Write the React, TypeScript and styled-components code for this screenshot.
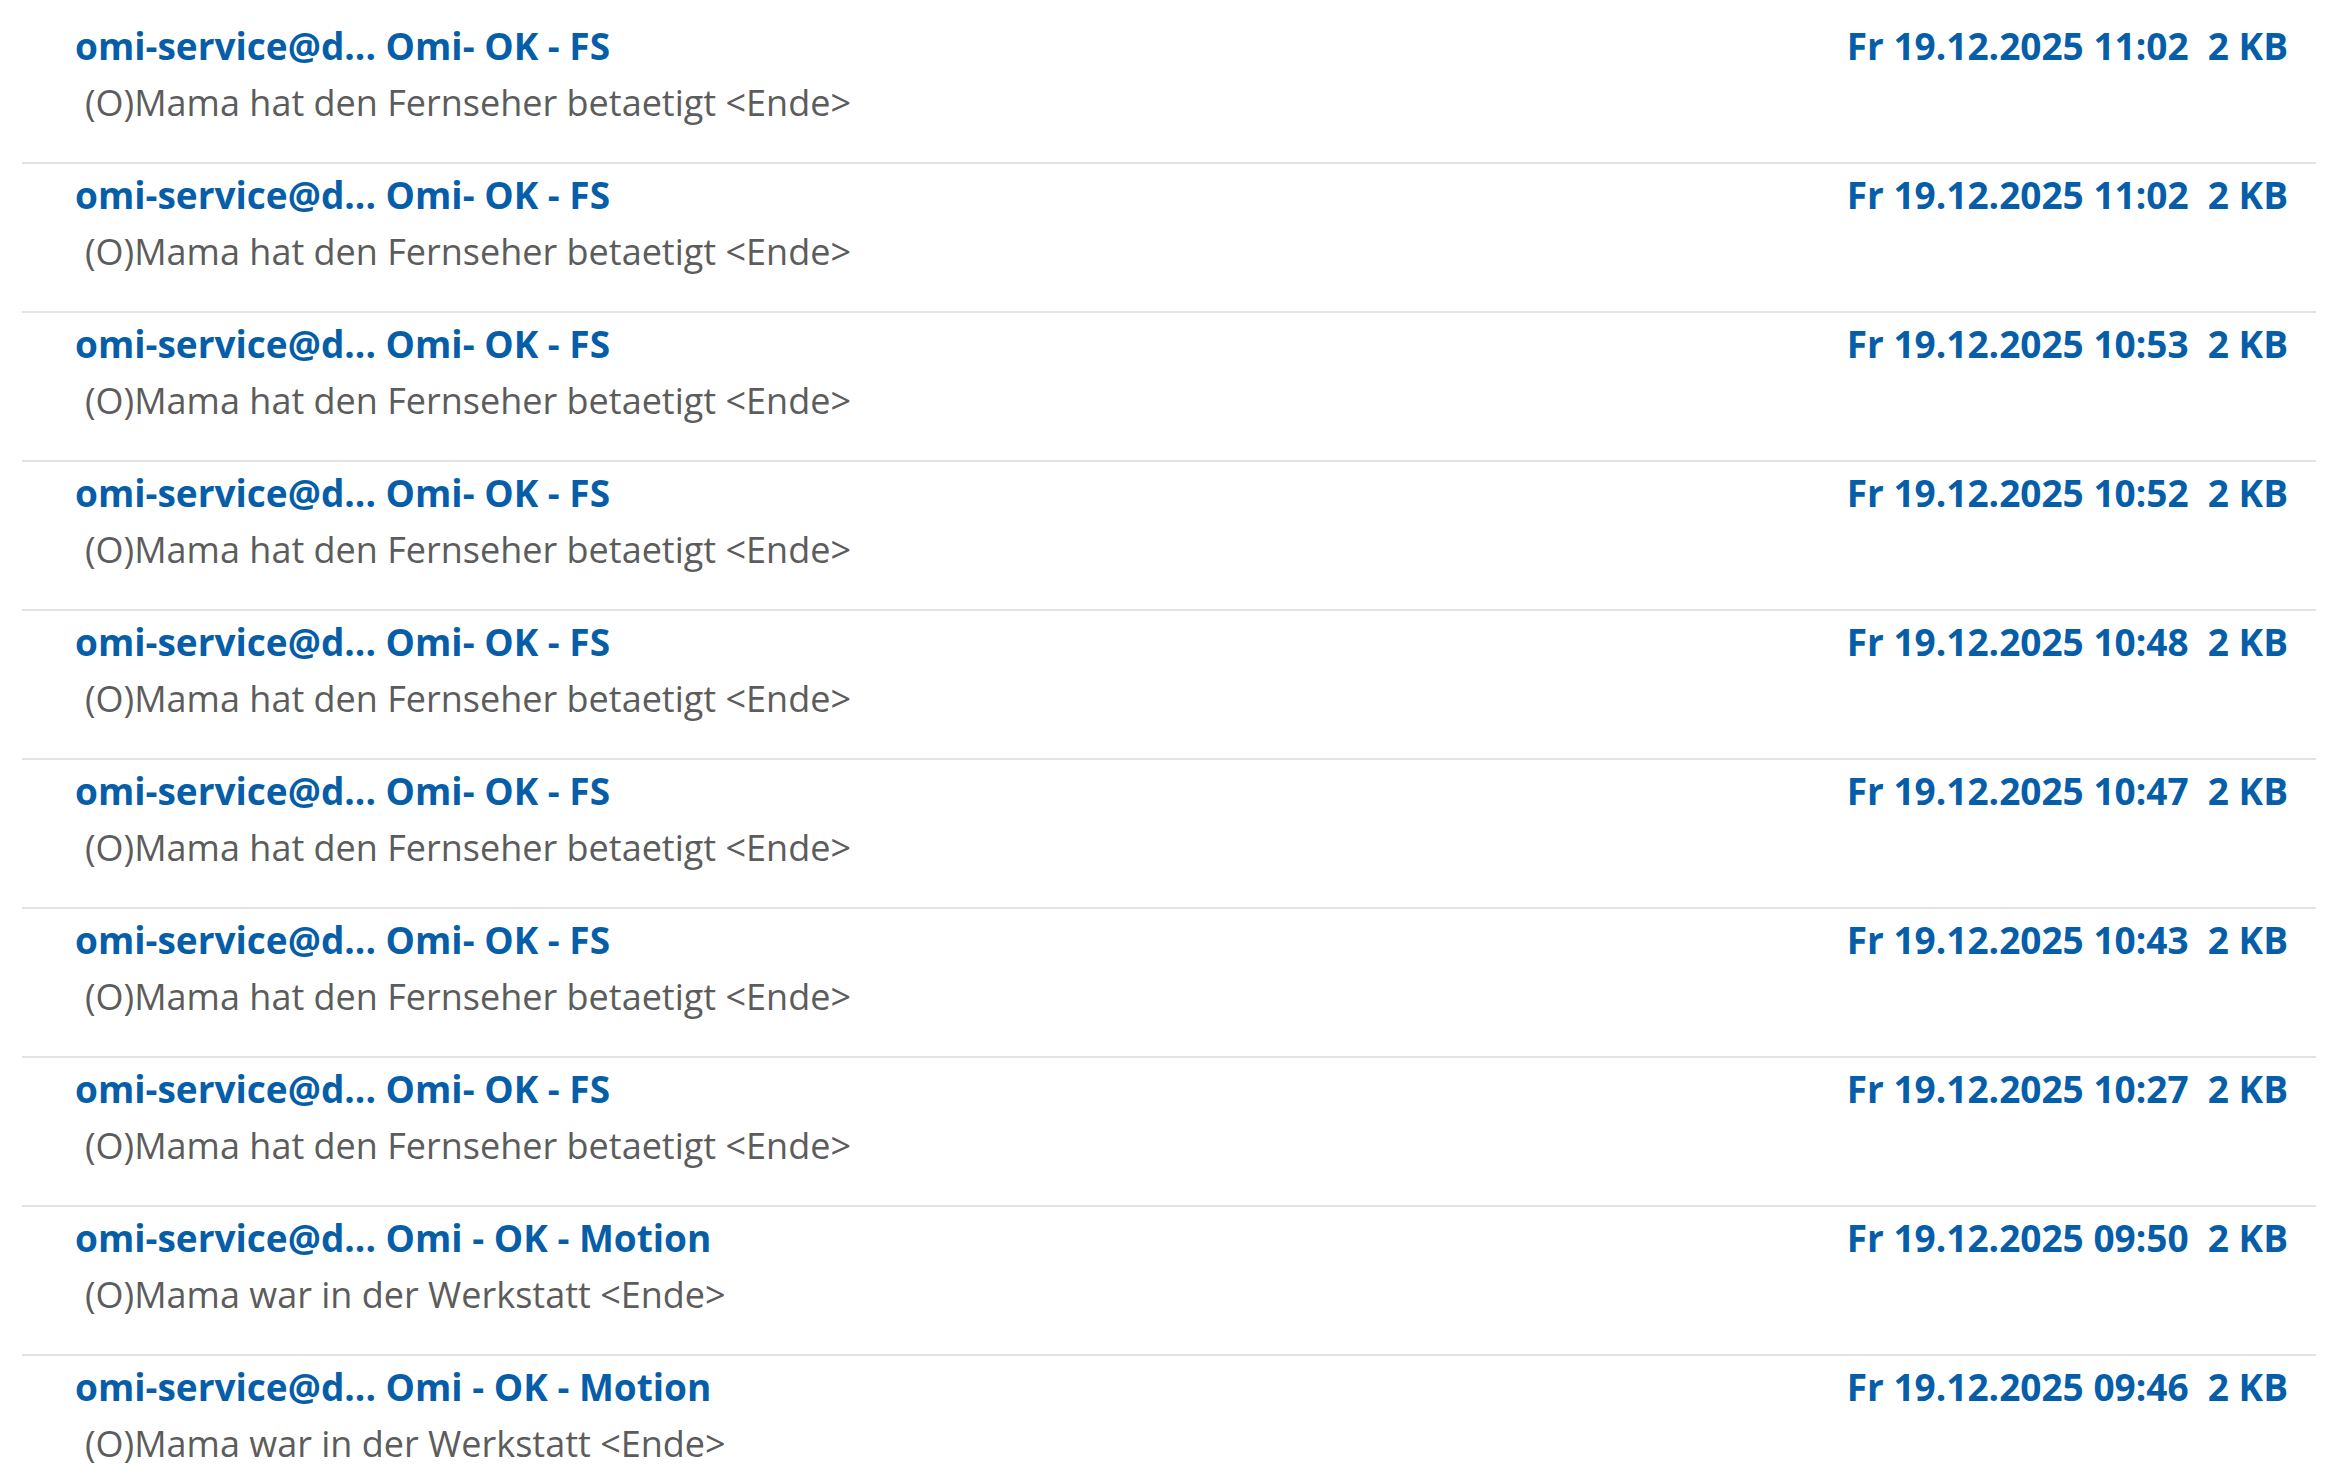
import React from "react";
import styled, { createGlobalStyle } from "styled-components";

interface Mail {
  sender: string;
  subject: string;
  preview: string;
  received: string;
  size: string;
}

const GlobalStyle = createGlobalStyle`
  html, body {
    margin: 0;
    padding: 0;
    background: #fff;
  }
  body {
    font-family: "Open Sans", "Noto Sans", sans-serif;
  }
`;

const MailList = styled.div`
  padding: 15px 19px 0 22px;
`;

const MailRow = styled.div`
  display: flex;
  justify-content: space-between;
  align-items: flex-start;
  height: 147px;
  padding-right: 28px;
  border-bottom: 2px solid #e3e3e3;
  box-sizing: content-box;

  &:last-child {
    border-bottom: none;
  }
`;

const MailText = styled.div`
  display: flex;
  flex-direction: column;
  padding-left: 53px;
`;

const Title = styled.div`
  font-weight: 700;
  font-size: 37px;
  line-height: 46px;
  color: #065ea8;
  margin-top: 8px;
  white-space: nowrap;
`;

const Preview = styled.div`
  font-size: 36px;
  line-height: 46px;
  color: #5c5c5c;
  margin-top: 11px;
  padding-left: 10px;
  white-space: pre;
`;

const Meta = styled.div`
  font-weight: 700;
  font-size: 37px;
  line-height: 46px;
  color: #065ea8;
  margin-top: 8px;
  white-space: pre;
`;

const mails: Mail[] = [
  { sender: "omi-service@d...", subject: "Omi- OK - FS", preview: "(O)Mama hat den Fernseher betaetigt <Ende>", received: "Fr 19.12.2025 11:02", size: "2 KB" },
  { sender: "omi-service@d...", subject: "Omi- OK - FS", preview: "(O)Mama hat den Fernseher betaetigt <Ende>", received: "Fr 19.12.2025 11:02", size: "2 KB" },
  { sender: "omi-service@d...", subject: "Omi- OK - FS", preview: "(O)Mama hat den Fernseher betaetigt <Ende>", received: "Fr 19.12.2025 10:53", size: "2 KB" },
  { sender: "omi-service@d...", subject: "Omi- OK - FS", preview: "(O)Mama hat den Fernseher betaetigt <Ende>", received: "Fr 19.12.2025 10:52", size: "2 KB" },
  { sender: "omi-service@d...", subject: "Omi- OK - FS", preview: "(O)Mama hat den Fernseher betaetigt <Ende>", received: "Fr 19.12.2025 10:48", size: "2 KB" },
  { sender: "omi-service@d...", subject: "Omi- OK - FS", preview: "(O)Mama hat den Fernseher betaetigt <Ende>", received: "Fr 19.12.2025 10:47", size: "2 KB" },
  { sender: "omi-service@d...", subject: "Omi- OK - FS", preview: "(O)Mama hat den Fernseher betaetigt <Ende>", received: "Fr 19.12.2025 10:43", size: "2 KB" },
  { sender: "omi-service@d...", subject: "Omi- OK - FS", preview: "(O)Mama hat den Fernseher betaetigt <Ende>", received: "Fr 19.12.2025 10:27", size: "2 KB" },
  { sender: "omi-service@d...", subject: "Omi - OK - Motion", preview: "(O)Mama war in der Werkstatt <Ende>", received: "Fr 19.12.2025 09:50", size: "2 KB" },
  { sender: "omi-service@d...", subject: "Omi - OK - Motion", preview: "(O)Mama war in der Werkstatt <Ende>", received: "Fr 19.12.2025 09:46", size: "2 KB" },
];

const App: React.FC = () => {
  return (
    <>
      <GlobalStyle />
      <MailList>
        {mails.map((mail, index) => (
          <MailRow key={index}>
            <MailText>
              <Title>
                {mail.sender} {mail.subject}
              </Title>
              <Preview>{mail.preview}</Preview>
            </MailText>
            <Meta>
              {mail.received}  {mail.size}
            </Meta>
          </MailRow>
        ))}
      </MailList>
    </>
  );
};

export default App;
